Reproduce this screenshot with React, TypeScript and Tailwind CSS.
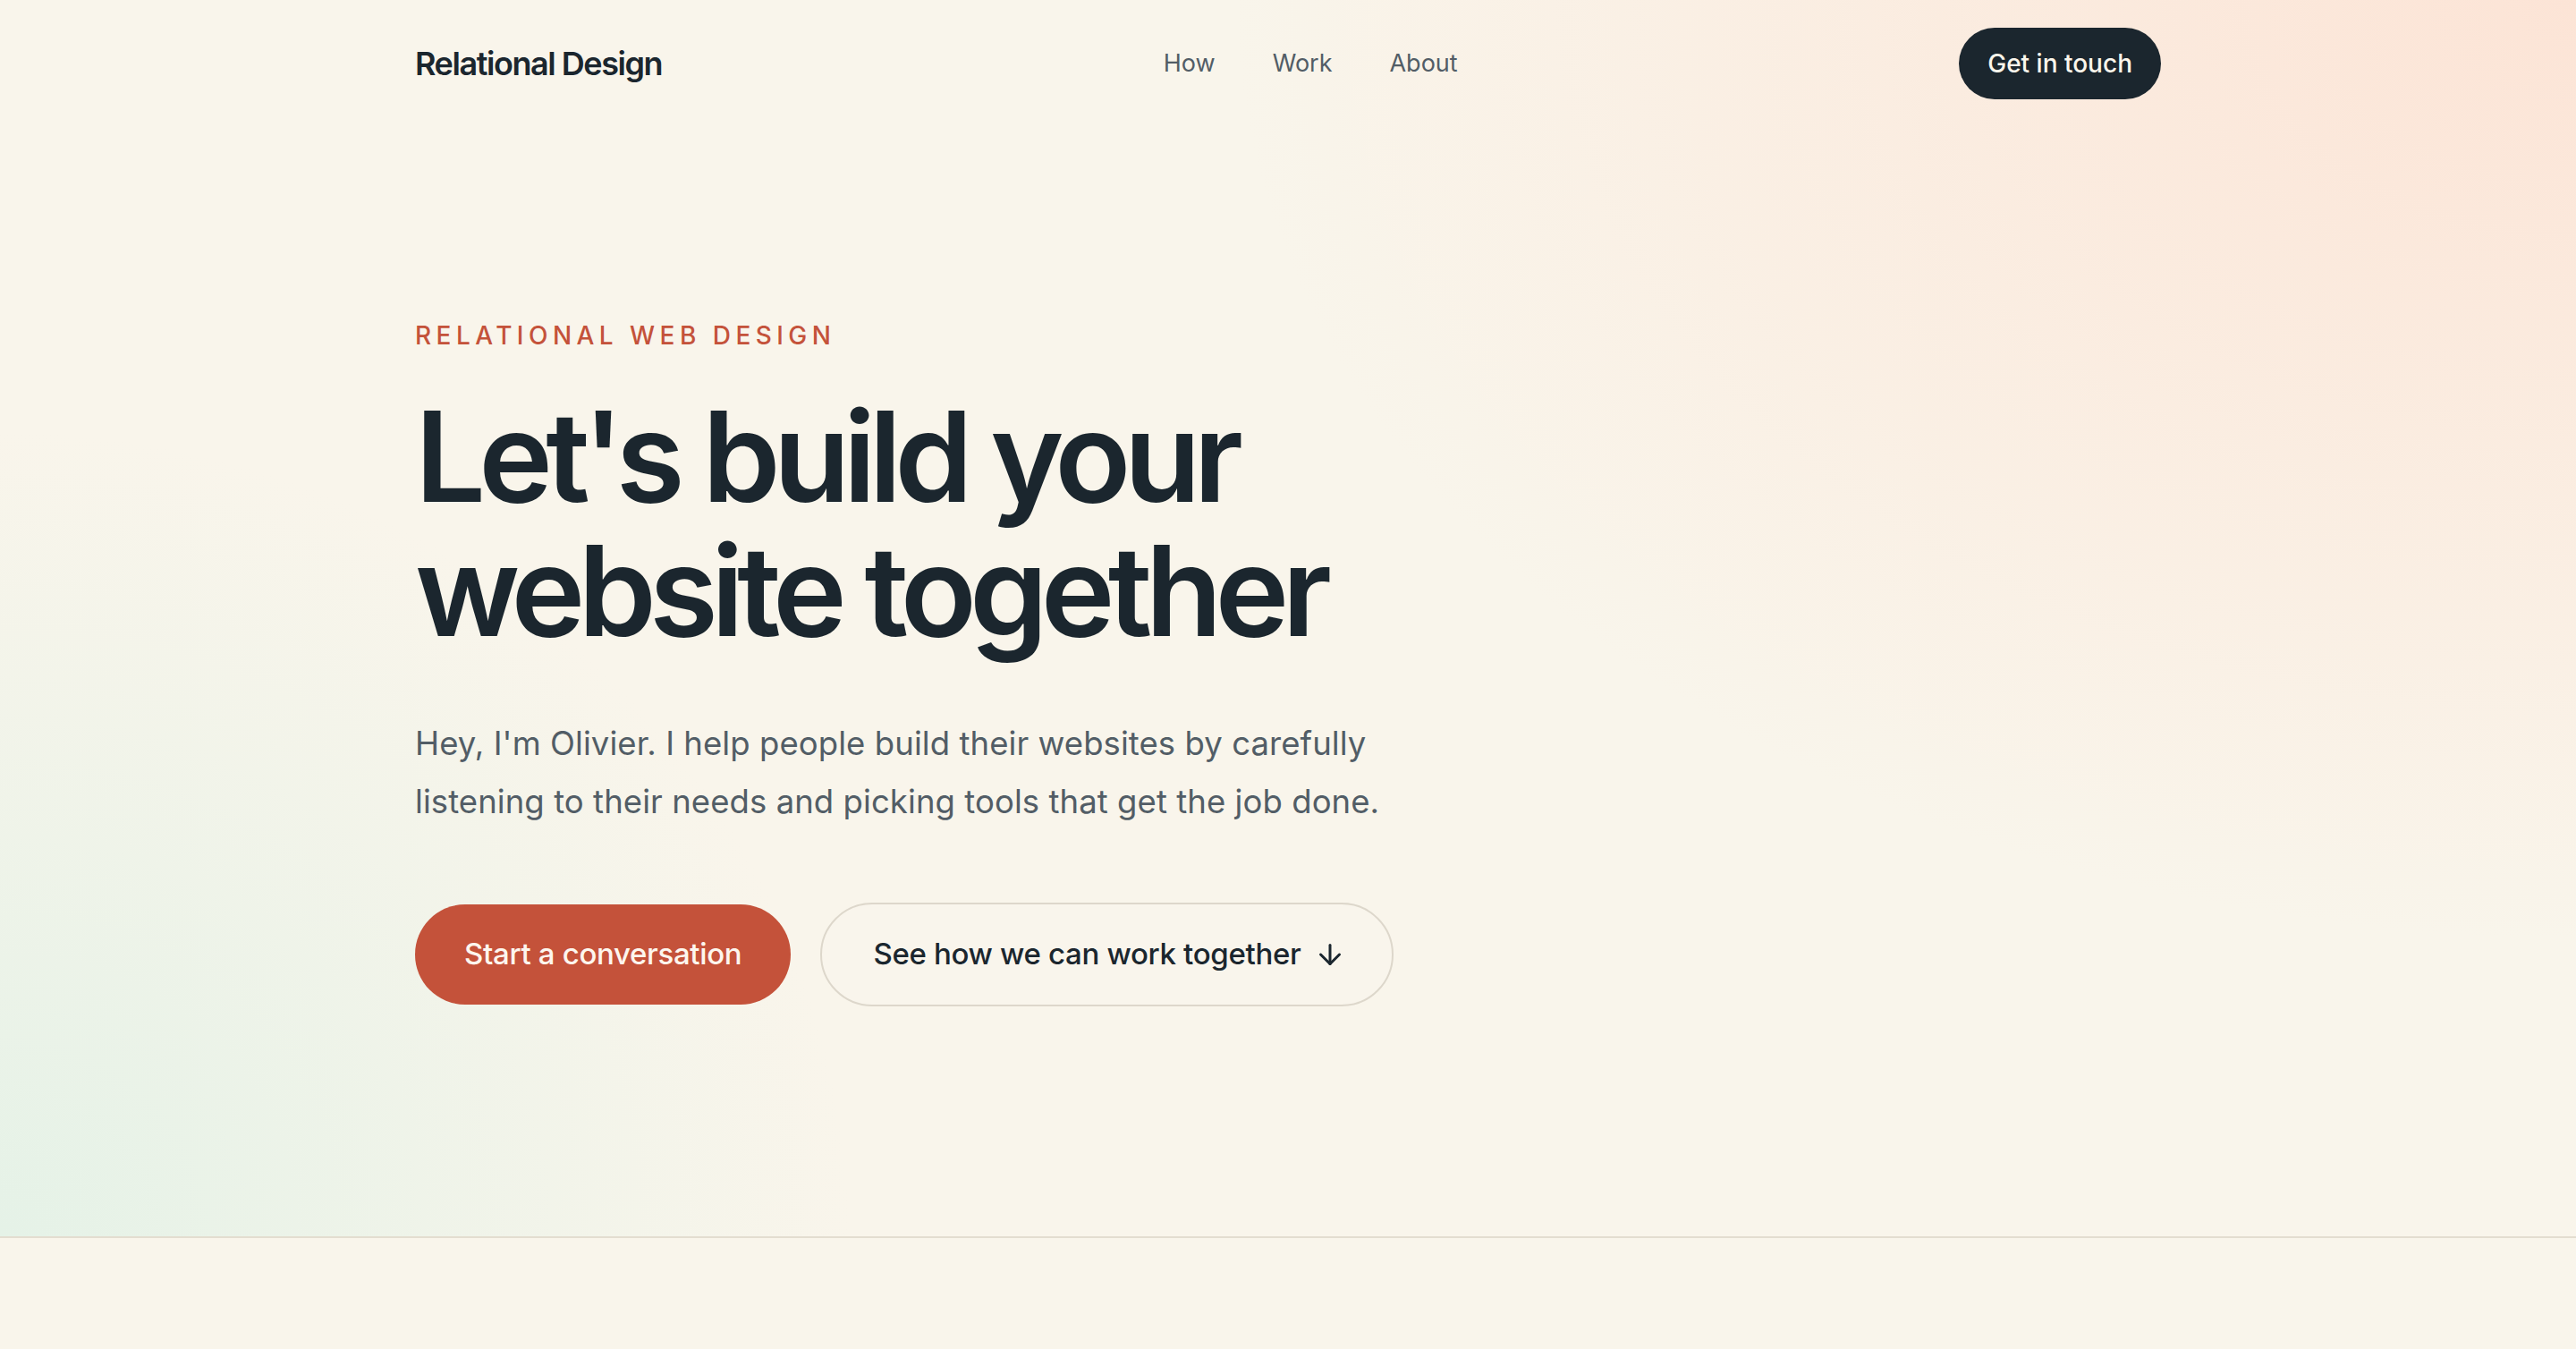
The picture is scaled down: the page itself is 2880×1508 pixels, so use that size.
import React from "react";
import { ArrowDown } from "lucide-react";

export default function App() {
  return (
    <div className="min-h-[1508px] w-full bg-[#f9f5eb] font-['Inter','Noto_Sans',sans-serif] text-[#1b262e]">
      <section className="relative overflow-hidden border-b-2 border-[#e3ddd0] bg-[radial-gradient(ellipse_1500px_1050px_at_100%_0%,#fce4d6_0%,rgba(252,228,214,0.6)_40%,rgba(249,245,235,0)_100%),radial-gradient(ellipse_950px_900px_at_0%_100%,#e5f2e7_0%,rgba(229,242,231,0.55)_45%,rgba(249,245,235,0)_100%)]">
        <div className="mx-auto w-[2048px] px-[48px]">
          <header className="flex h-[142px] items-center justify-between">
            <div className="text-[36px] font-semibold tracking-[-0.04em] text-[#1b262e]">
              Relational Design
            </div>
            <nav className="flex items-center gap-[64px] text-[27px] text-[#525d66]">
              <a href="#how">How</a>
              <a href="#work">Work</a>
              <a href="#about">About</a>
            </nav>
            <a
              href="#contact"
              className="flex h-[80px] items-center rounded-full bg-[#1b262e] px-[32px] text-[28px] font-medium text-[#fbf6ec]"
            >
              Get in touch
            </a>
          </header>

          <div className="flex flex-col items-start pb-[257px] pt-[213px]">
            <p className="text-[28px] font-medium uppercase leading-[40px] tracking-[0.195em] text-[#c4523a]">
              Relational web design
            </p>
            <h1 className="mt-[40px] text-[140px] font-semibold leading-[150px] tracking-[-0.056em] text-[#1b262e]">
              Let's build your
              <br />
              website together
            </h1>
            <p className="mt-[64px] max-w-[1152px] text-[36.5px] leading-[65px] tracking-[0.002em] text-[#525d66]">
              Hey, I'm Olivier. I help people build their websites by carefully listening to their needs and picking tools that get the job done.
            </p>
            <div className="mt-[80px] flex items-center gap-[33px]">
              <a
                href="#contact"
                className="flex h-[112px] items-center rounded-full bg-[#c4523a] px-[55px] text-[33px] font-medium tracking-[-0.01em] text-[#fdf6ee]"
              >
                Start a conversation
              </a>
              <a
                href="#how"
                className="flex h-[116px] items-center gap-[15px] rounded-full border-2 border-[#ddd7cb] bg-[#faf6ee]/40 pl-[57px] pr-[51px] text-[33px] font-medium tracking-[-0.01em] text-[#1b262e]"
              >
                See how we can work together
                <ArrowDown size={36} strokeWidth={2} />
              </a>
            </div>
          </div>
        </div>
      </section>
      <div className="h-[127px] w-full bg-[#f9f5eb]" />
    </div>
  );
}
